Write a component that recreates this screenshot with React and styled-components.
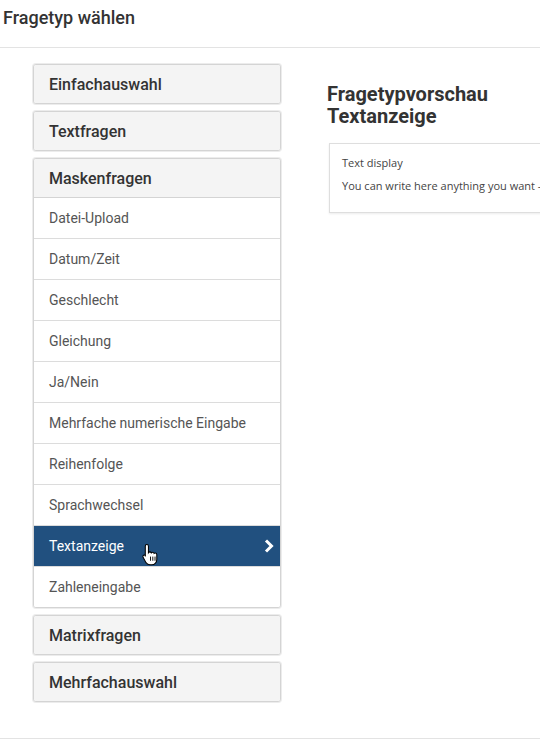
import React from "react";
import styled, { createGlobalStyle } from "styled-components";

const Global = createGlobalStyle`
  html, body { margin: 0; padding: 0; background: #fff; }
  body { font-family: Roboto, "Liberation Sans", sans-serif; color: #333; }
  * { box-sizing: border-box; }
`;

const Page = styled.div`
  width: 540px;
  height: 742px;
  overflow: hidden;
  display: flex;
  flex-direction: column;
`;

const Header = styled.div`
  height: 48px;
  padding: 7px 3px 0;
  border-bottom: 1px solid #e3e3e3;
  font-size: 18px;
  line-height: 22px;
  font-weight: 500;
  color: #333;
`;

const Body = styled.div`
  flex: 1;
  display: grid;
  grid-template-columns: 248px 1fr;
  column-gap: 46px;
  padding: 16px 0 0 33px;
  border-bottom: 1px solid #e3e3e3;
  margin-bottom: 3px;
`;

const Column = styled.div`
  display: flex;
  flex-direction: column;
  gap: 7px;
`;

const Panel = styled.div`
  border: 1px solid #d4d4d4;
  box-shadow: 0 0 0 1px #ececec;
  border-radius: 3px;
  background: #fff;
  overflow: hidden;
`;

const PanelHead = styled.div`
  height: ${(p) => (p.$open ? "39px" : "38px")};
  display: flex;
  align-items: center;
  padding-left: 15px;
  background: #f4f4f4;
  font-size: 16px;
  font-weight: 500;
  color: #333;
  border-bottom: ${(p) => (p.$open ? "1px solid #d4d4d4" : "none")};
`;

const Item = styled.div`
  position: relative;
  height: 41px;
  display: flex;
  align-items: center;
  justify-content: space-between;
  padding: 0 5px 0 15px;
  font-size: 14px;
  color: ${(p) => (p.$active ? "#fff" : "#555")};
  background: ${(p) => (p.$active ? "#21507f" : "#fff")};
  border-bottom: 1px solid #dcdcdc;
  &:last-child { border-bottom: none; height: 40px; }
`;

const Cursor = styled.svg`
  position: absolute;
  left: 107px;
  top: 17px;
`;

const Preview = styled.div`
  padding-top: 19px;
`;

const Title = styled.h2`
  margin: 0 0 16px;
  font-family: Roboto, "Liberation Sans", sans-serif;
  font-size: 20px;
  line-height: 22px;
  font-weight: 700;
  color: #333;
`;

const Card = styled.div`
  margin-left: 2px;
  width: 260px;
  height: 70px;
  border: 1px solid #dedede;
  box-shadow: 0 1px 2px rgba(0, 0, 0, 0.08);
  padding: 12px 12px;
  font-family: "Open Sans", "Liberation Sans", sans-serif;
  font-size: 11px;
  color: #444;
  white-space: nowrap;
  overflow: hidden;
`;

const CardLine = styled.div`
  line-height: 14px;
  margin-bottom: 9px;
`;

const items = [
  "Datei-Upload",
  "Datum/Zeit",
  "Geschlecht",
  "Gleichung",
  "Ja/Nein",
  "Mehrfache numerische Eingabe",
  "Reihenfolge",
  "Sprachwechsel",
  "Textanzeige",
  "Zahleneingabe",
];

function Hand() {
  return (
    <Cursor width="18" height="23" viewBox="0 0 17 22">
      <path
        d="M5.5 1.5c.8 0 1.5.7 1.5 1.5v6.2c.3-.5.8-.7 1.3-.7.7 0 1.2.4 1.4 1 .3-.4.7-.6 1.2-.6.8 0 1.3.5 1.5 1.1.3-.3.7-.4 1.1-.4.9 0 1.5.7 1.5 1.5v4.6c0 2.6-1.8 5.2-4.8 5.2H8.5c-1.8 0-2.9-.8-3.8-2.1L1.9 13.6c-.4-.7-.2-1.5.4-1.9.6-.4 1.4-.2 1.8.4L4 12.9V3c0-.8.7-1.5 1.5-1.5z"
        fill="#fff"
        stroke="#000"
        strokeWidth="1"
      />
      <path d="M9 13v4M11.2 13v4M13.3 13v4" stroke="#000" strokeWidth="0.9" />
    </Cursor>
  );
}

function Chevron() {
  return (
    <svg width="12" height="14" viewBox="0 0 12 14">
      <path d="M3 1.5l5.5 5.5L3 12.5" fill="none" stroke="#fff" strokeWidth="3" />
    </svg>
  );
}

export default function App() {
  return (
    <Page>
      <Global />
      <Header>Fragetyp wählen</Header>
      <Body>
        <Column>
          <Panel>
            <PanelHead>Einfachauswahl</PanelHead>
          </Panel>
          <Panel>
            <PanelHead>Textfragen</PanelHead>
          </Panel>
          <Panel>
            <PanelHead $open>Maskenfragen</PanelHead>
            {items.map((t) => (
              <Item key={t} $active={t === "Textanzeige"}>
                {t}
                {t === "Textanzeige" && (
                  <>
                    <Chevron />
                    <Hand />
                  </>
                )}
              </Item>
            ))}
          </Panel>
          <Panel>
            <PanelHead>Matrixfragen</PanelHead>
          </Panel>
          <Panel>
            <PanelHead>Mehrfachauswahl</PanelHead>
          </Panel>
        </Column>
        <Preview>
          <Title>
            Fragetypvorschau
            <br />
            Textanzeige
          </Title>
          <Card>
            <CardLine>Text display</CardLine>
            <CardLine>You can write here anything you want - </CardLine>
          </Card>
        </Preview>
      </Body>
    </Page>
  );
}
